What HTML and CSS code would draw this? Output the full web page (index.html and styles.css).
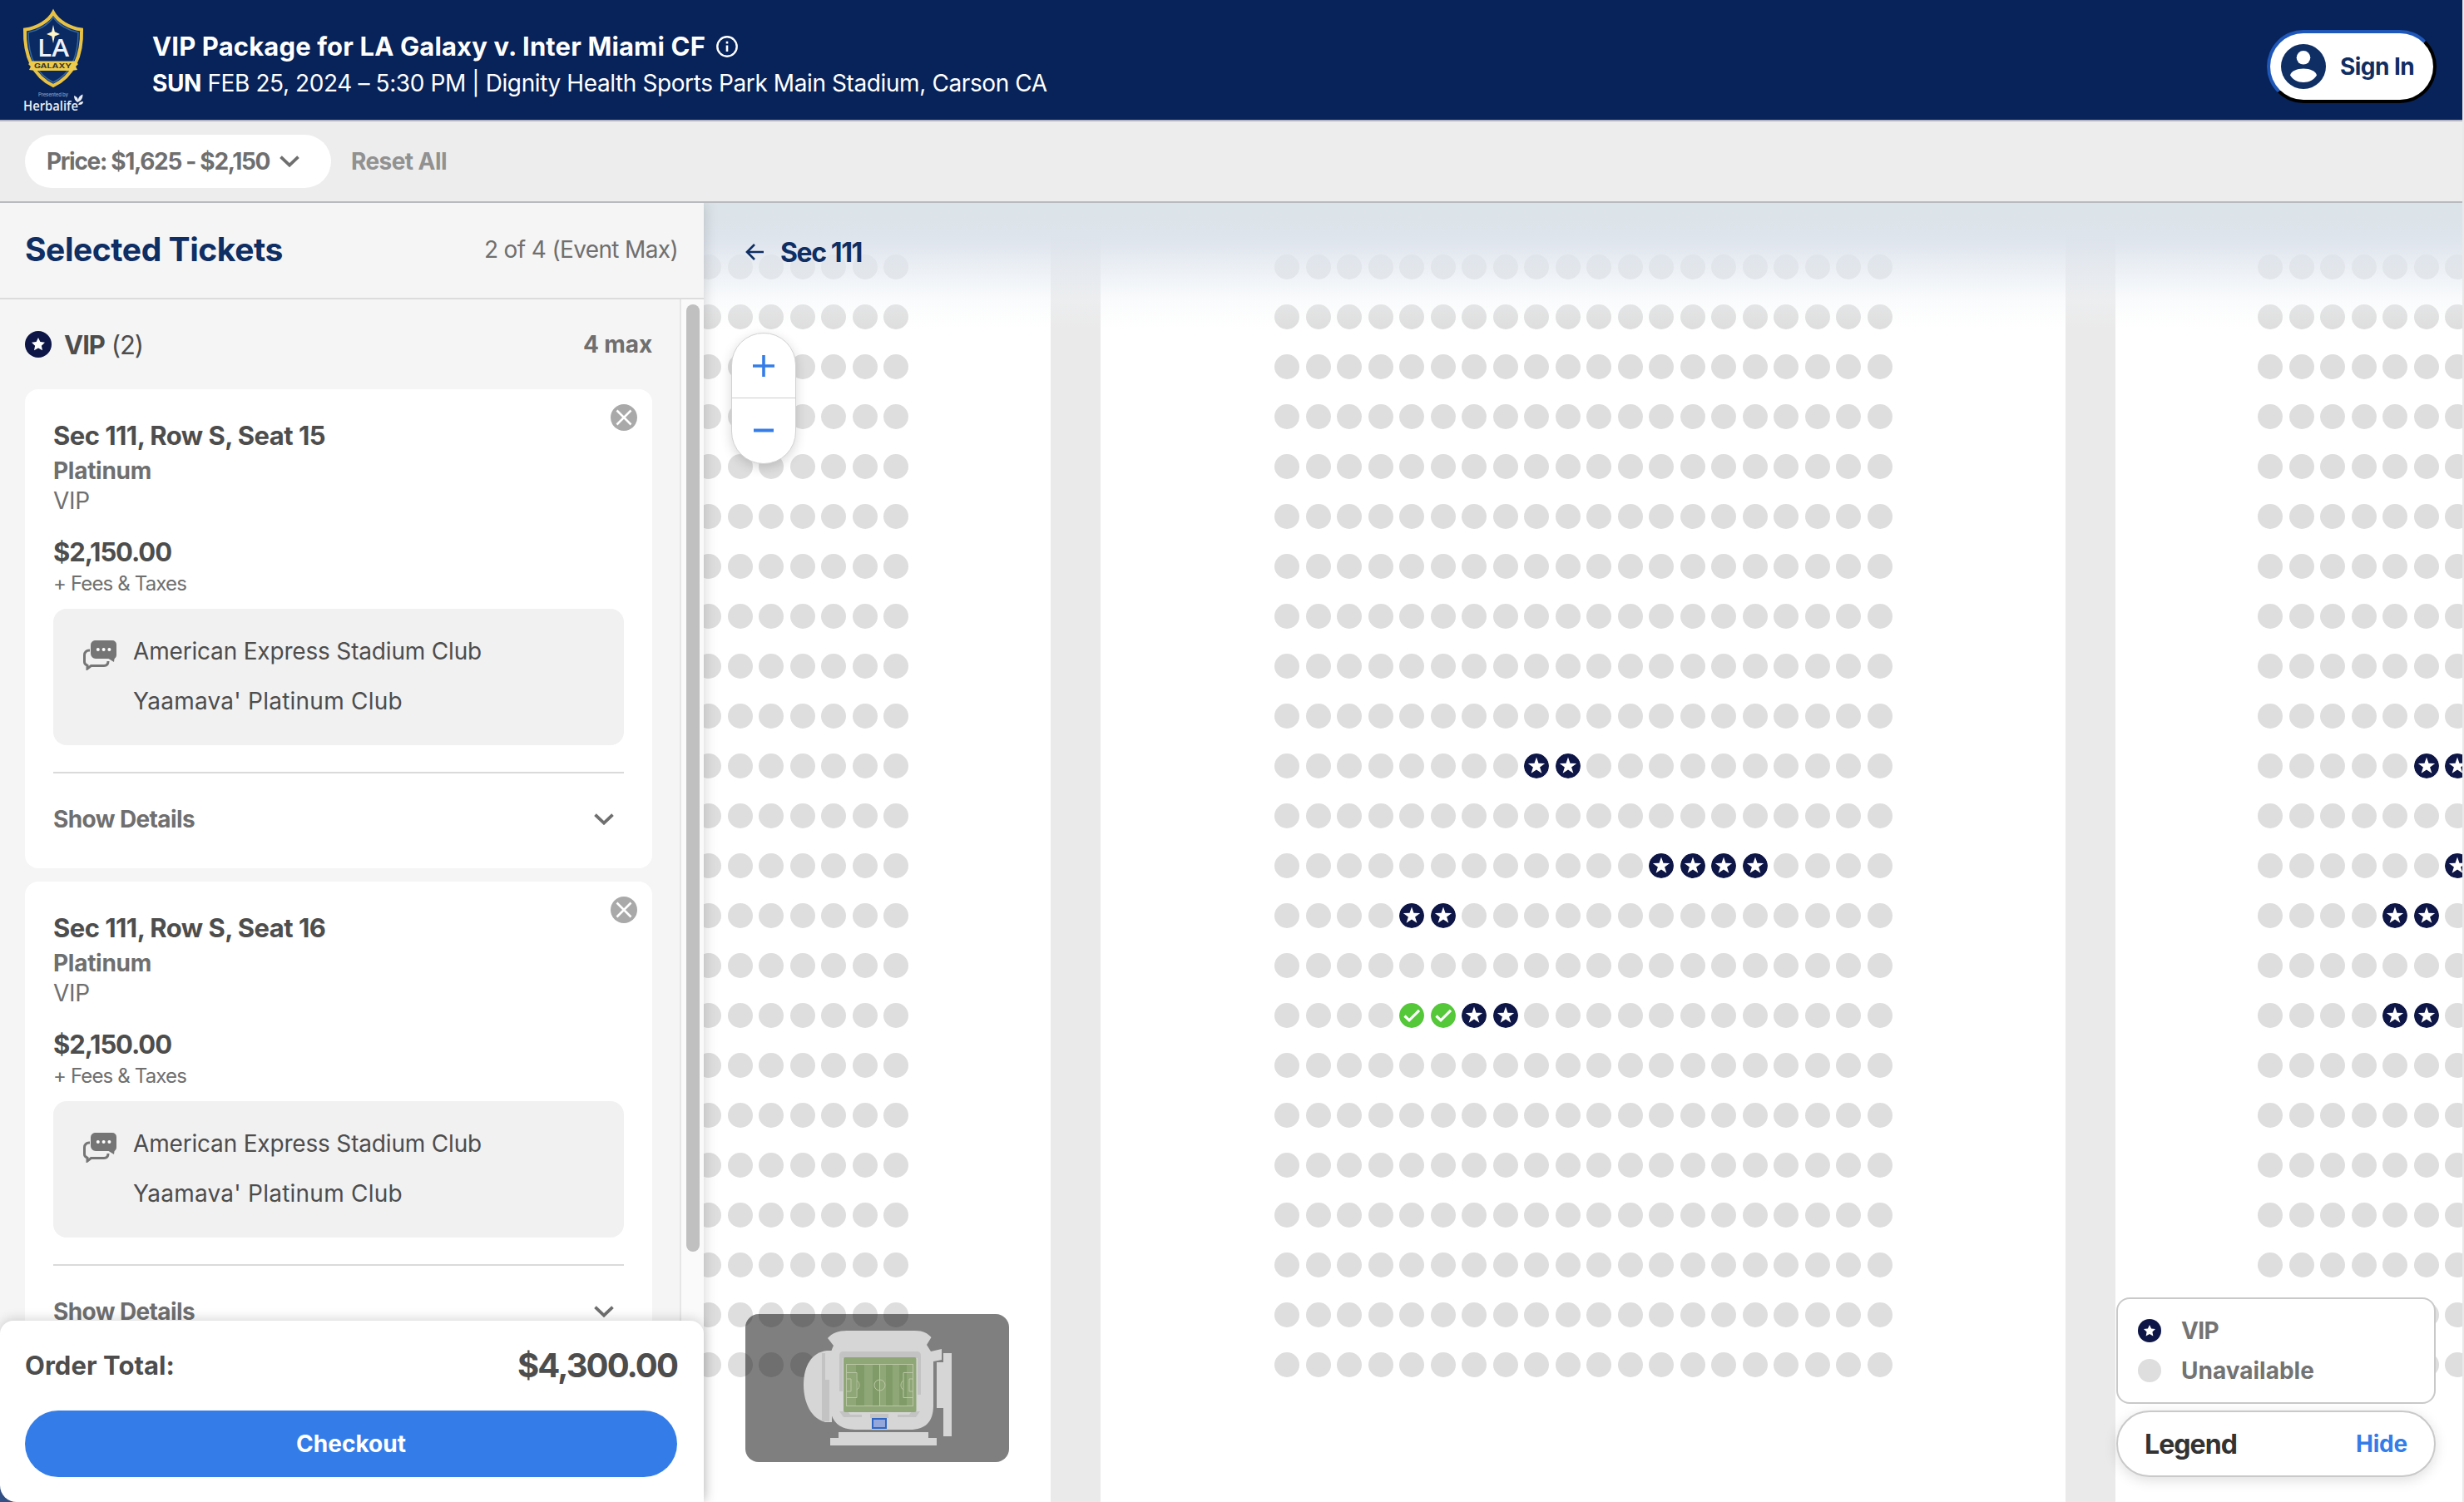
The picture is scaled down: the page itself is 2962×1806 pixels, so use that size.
FILE: index.html
```html
<!DOCTYPE html>
<html lang="en">
<head>
<meta charset="utf-8">
<title>VIP Package for LA Galaxy v. Inter Miami CF</title>
<link rel="stylesheet" href="styles.css">
</head>
<body>
<svg class="defs" aria-hidden="true">
  <symbol id="star" viewBox="0 0 32 32"><circle cx="16" cy="16" r="16" fill="#0d1646"/><path fill="#fff" d="M16 8l2.4 5.1 5.6.7-4.1 3.9 1.1 5.6-5-2.8-5 2.8 1.1-5.6L8 13.800l5.600-.7z"/></symbol>
  <symbol id="seat-star" viewBox="0 0 30 30"><circle cx="15" cy="15" r="15" fill="#0d1646"/><path fill="#fff" d="M15 4.500l2.500 7.200 7.700.200-6.100 4.500 2.300 7.400L15 19.400l-6.400 4.400 2.300-7.400-6.100-4.500 7.700-.200z"/></symbol>
  <symbol id="seat-check" viewBox="0 0 30 30"><circle cx="15" cy="15" r="15" fill="#55c83a"/><path fill="none" stroke="#fff" stroke-width="3.200" d="M6.500 15.500l5.500 5.300 12-12"/></symbol>
  <symbol id="chevron" viewBox="0 0 24 14"><path fill="none" stroke="#6f6f6f" stroke-width="3.800" d="M1.500 1.700L12 11.600 22.500 1.700"/></symbol>
  <symbol id="close" viewBox="0 0 32 32"><circle cx="16" cy="16" r="16" fill="#a9a9a9"/><path stroke="#fff" stroke-width="2.600" d="M7.500 7.500l17 17m0-17l-17 17"/></symbol>
  <symbol id="chat" viewBox="0 0 40 36"><path fill="#757575" d="M15 0h20a5 5 0 0 1 5 5v13a5 5 0 0 1-2.500 4.200L37 26l-6.500-4H15a6 6 0 0 1-6-6V5.500A5.500 5.500 0 0 1 15 0z"/><g fill="#fff"><circle cx="17.800" cy="11" r="2"/><circle cx="24.600" cy="11" r="2"/><circle cx="31.400" cy="11" r="2"/></g><path fill="none" stroke="#757575" stroke-width="3" d="M8 12H7a5.500 5.500 0 0 0-5.500 5.500v8.500c0 2 1 3.200 3.500 4.200V34l4.500-3.500H25c3.500 0 5-2 5-5.500"/></symbol>
</svg>
<div class="page">
  <header class="header">
    <svg class="logo" viewBox="0 0 72 122">
      <path d="M36 2C31 12 16 21 2 22.500 1 54 12 79 36 90c24-11 35-36 34-67.500C56 21 41 12 36 2z" fill="#0a2a63" stroke="#e8c245" stroke-width="4"/>
      <path d="M36 7.500C30 17 17 24 6 26c0 28 9 50 30 60 21-10 30-32 30-60C55 24 42 17 36 7.500z" fill="none" stroke="#35679c" stroke-width="1.500"/>
      <path d="M36 17l1.800 8.200L44 28l-6.200 2.500L36 39l-1.800-8.500L28 28l6.200-2.800z" fill="#fff7c8"/>
      <text x="17" y="55" class="logo-la" textLength="38" lengthAdjust="spacingAndGlyphs">LA</text>
      <path d="M6 64l4-3.500h52l4 3.500-3 3 2 4-7 1H14l-7-1 2-4z" fill="#edcb4c"/>
      <text x="13" y="68.500" class="logo-galaxy" textLength="45" lengthAdjust="spacingAndGlyphs">GALAXY</text>
      <text x="18" y="103" class="logo-by" textLength="36">Presented by</text>
      <text x="0" y="120" class="logo-herb" textLength="66" lengthAdjust="spacingAndGlyphs">Herbalife</text>
      <path d="M65 110c-3-2-4-5-4-8 3 1 5 3 5 6 0-4 2-6 5.500-7.500 0 5-2 8-6.500 9.500zM66 113c1-3 3-4 6-4 0 3-2 4.500-6 4z" fill="#e9edf5"/>
    </svg>
    <div class="event">
      <h1 class="event-title"><span class="t-title">VIP Package for LA Galaxy v. Inter Miami CF</span>
        <svg class="info" viewBox="0 0 26 26"><circle cx="13" cy="13" r="11.700" fill="none" stroke="#fff" stroke-width="2.400"/><path stroke="#fff" stroke-width="2.600" d="M13 11.500V19M13 6.800v2.700"/></svg>
      </h1>
      <p class="event-meta"><span class="t-meta"><b>SUN</b> FEB 25, 2024 – 5:30 PM | Dignity Health Sports Park Main Stadium, Carson CA</span></p>
    </div>
    <button class="sign-in">
      <svg class="avatar" viewBox="0 0 54 54"><circle cx="27" cy="27" r="27" fill="#0e2e64"/><circle cx="27" cy="16.300" r="8.300" fill="#fff"/><path fill="#fff" d="M11 37.500c1-5 8-8 16-8s15 3 16 8c-3 5-9 8.500-16 8.500s-13-3.500-16-8.500z"/></svg>
      <span class="t-sign">Sign In</span>
    </button>
  </header>
  <nav class="filters">
    <button class="price"><span class="t-pricef">Price: $1,625 - $2,150</span><svg class="chev"><use href="#chevron"/></svg></button>
    <span class="reset t-reset">Reset All</span>
  </nav>
  <main class="main">
    <aside class="panel">
      <div class="panel-head">
        <h2 class="t-selected">Selected Tickets</h2>
        <span class="count t-count">2 of 4 (Event Max)</span>
      </div>
      <div class="panel-body">
        <div class="list">
          <div class="group">
            <svg class="group-icon"><use href="#star"/></svg>
            <span class="group-name t-group"><b>VIP</b> (2)</span>
            <span class="group-max t-max">4 max</span>
          </div>
          <article class="ticket">
            <svg class="remove"><use href="#close"/></svg>
            <h3 class="seat-name t-seat">Sec 111, Row S, Seat 15</h3>
            <p class="level">Platinum</p>
            <p class="type">VIP</p>
            <p class="amount">$2,150.00</p>
            <p class="fees">+ Fees &amp; Taxes</p>
            <div class="perks">
              <svg class="chat"><use href="#chat"/></svg>
              <div><p class="t-perk1">American Express Stadium Club</p><p class="t-perk2">Yaamava' Platinum Club</p></div>
            </div>
            <div class="details"><span>Show Details</span><svg class="chev"><use href="#chevron"/></svg></div>
          </article>
          <article class="ticket">
            <svg class="remove"><use href="#close"/></svg>
            <h3 class="seat-name t-seat">Sec 111, Row S, Seat 16</h3>
            <p class="level">Platinum</p>
            <p class="type">VIP</p>
            <p class="amount">$2,150.00</p>
            <p class="fees">+ Fees &amp; Taxes</p>
            <div class="perks">
              <svg class="chat"><use href="#chat"/></svg>
              <div><p class="t-perk1">American Express Stadium Club</p><p class="t-perk2">Yaamava' Platinum Club</p></div>
            </div>
            <div class="details"><span>Show Details</span><svg class="chev"><use href="#chevron"/></svg></div>
          </article>
        </div>
        <div class="track"><div class="thumb"></div></div>
      </div>
      <div class="order">
        <div class="total"><span class="t-order">Order Total:</span><strong>$4,300.00</strong></div>
        <button class="checkout">Checkout</button>
      </div>
    </aside>
    <section class="map">
      <div class="blocks">
        <div class="block block-left"><div class="seats" data-block="left"></div></div>
        <div class="block block-center"><div class="seats" data-block="center"></div></div>
        <div class="block block-right"><div class="seats" data-block="right"></div></div>
      </div>
      <div class="fade"></div>
      <div class="back">
        <svg class="arrow" viewBox="0 0 22 20"><path fill="none" stroke="#0e2e64" stroke-width="2.600" d="M11 1L2 10l9 9M2 10h20"/></svg>
        <span class="t-sec">Sec 111</span>
      </div>
      <div class="zoom">
        <svg class="zoom-btn" viewBox="0 0 76 77"><path stroke="#347de8" stroke-width="3.600" d="M25 39h26M38 26v26"/></svg>
        <svg class="zoom-btn" viewBox="0 0 76 77"><path stroke="#347de8" stroke-width="4" d="M26 38.500h24"/></svg>
      </div>
      <svg class="minimap" viewBox="0 0 317 178">
        <g fill="#d6d6d6">
          <path d="M98 44C80 46 70 62 70 85s10 41 26 45h8V44z"/>
          <path d="M99 29C104 23 112 20 122 20h82c10 0 15 3 19.500 8l-5.500 9 5 8 13-3v13l-10 2v53c0 20-10 29-28 29h-66c-18 0-30-9-30-29V55c0-8 2-13 4-17z"/>
          <path d="M230 58h8v-11h10v100h-10v-34h-8zM112 142h108v7h10v9H102v-9h10z"/>
        </g>
        <path fill="#c3c3c3" d="M92 47h4v32h5v50h-9zM113 50q0-5 5-5h88q5 0 5 5v47h-4V53h-90v40h-4zM113 117h10l3 4h14v3h-22zM210 117h-10l-3 4h-14v3h22zM150 120h22v5h-22z"/>
        <rect x="118" y="52" width="87.500" height="66" rx="2" fill="#8fa777"/>
        <path fill="#819b68" d="M133 60h10v50h-10zM153 60h8v50h-8zM169 60h8v50h-8zM185 60h9v50h-9z"/>
        <g fill="none" stroke="#b9c6a4" stroke-width="1"><rect x="121.500" y="60.500" width="80" height="50"/><path d="M161.500 60v50M122 70.500h12v30h-12M122 78h5v15h-5M202 70.500h-12v30h12M202 78h-5v15h5M134 80c4 2 4 9 0 11M190 80c-4 2-4 9 0 11"/><circle cx="161.500" cy="85.500" r="6.500"/></g>
        <rect x="153" y="126" width="16" height="11" fill="#93a7dc" stroke="#2d66c4" stroke-width="2"/>
      </svg>
      <div class="legend">
        <div class="legend-items">
          <div class="legend-row"><svg class="legend-icon"><use href="#star"/></svg><span class="t-lvip">VIP</span></div>
          <div class="legend-row"><i class="legend-icon legend-gray"></i><span>Unavailable</span></div>
        </div>
        <div class="legend-bar"><span>Legend</span><a>Hide</a></div>
      </div>
    </section>
  </main>
</div>
<script src="seats.js"></script>
</body>
</html>
```
FILE: styles.css
```css
* { box-sizing: border-box; }
body { margin: 0; background: #e9e9ea; font-family: Inter, "Open Sans", sans-serif; font-size: 28px; color: #4d4d4d; white-space: nowrap; }
h1, h2, h3, p { margin: 0; }
button { font: inherit; margin: 0; cursor: pointer; }
svg { display: block; flex: none; }
.defs { position: absolute; width: 0; height: 0; }

/* per-label tracking */
.t-title { letter-spacing: .14px; }
.t-meta { letter-spacing: -.4px; }
.t-sign, .t-reset { letter-spacing: -.56px; }
.t-pricef { letter-spacing: -1.32px; }
.t-selected { letter-spacing: -.43px; }
.t-count { letter-spacing: -.64px; }
.t-group { letter-spacing: -1px; }
.t-max { letter-spacing: -.13px; }
.t-seat { letter-spacing: -.54px; }
.t-perk1 { letter-spacing: -.18px; }
.t-perk2 { letter-spacing: .24px; }
.t-order { letter-spacing: .06px; }
.t-sec { letter-spacing: -1.4px; }
.t-lvip { letter-spacing: -.6px; }

.page { width: 2960px; height: 1806px; display: flex; flex-direction: column; overflow: hidden; background: #fff; }

.header { height: 146px; display: flex; align-items: flex-start; background: #08235a; border-bottom: 2px solid #b4b5c0; color: #fff; padding-left: 28px; padding-right: 31px; }
.logo { width: 72px; height: 122px; margin-top: 13px; overflow: visible; }
.logo-la { font: 600 29px "Open Sans", sans-serif; fill: #eef1fa; }
.logo-galaxy { font: 700 7px Inter, sans-serif; fill: #3c3a28; }
.logo-by { font: 500 6px Inter, sans-serif; fill: #8d9bbb; }
.logo-herb { font: 600 17px "Open Sans", sans-serif; fill: #e9edf5; }
.event { margin-left: 83px; flex: 1; padding-top: 32px; }
.event-title { display: flex; align-items: center; gap: 13px; font-size: 31px; line-height: 48px; font-weight: 700; }
.info { width: 26px; height: 26px; }
.event-meta { line-height: 40px; }
.sign-in { margin-top: 36px; width: 204px; height: 88px; border-radius: 44px; border: 4px solid; border-color: #1f57b8 #000 #000 #1f57b8; background: #fff; color: #0e2e64; font-weight: 700; display: flex; align-items: center; gap: 17px; padding: 0 0 0 13px; }
.avatar { width: 54px; height: 54px; }

.filters { height: 98px; display: flex; align-items: center; background: #ededed; border-bottom: 2px solid #b9babf; padding-left: 30px; gap: 24px; font-weight: 700; }
.price { width: 368px; height: 64px; border: 0; border-radius: 32px; background: #fff; color: #6f6f6f; font-weight: 700; display: flex; align-items: center; gap: 12px; padding: 0 0 0 26px; }
.chev { width: 24px; height: 14px; }
.reset { color: #919191; }

.main { flex: 1; display: flex; min-height: 0; }
.panel { width: 846px; display: flex; flex-direction: column; background: #f5f5f5; position: relative; z-index: 2; box-shadow: 0 0 16px rgba(0,0,0,.18); clip-path: inset(0 -20px 0 0); }
.panel-head { height: 116px; flex: none; display: flex; justify-content: space-between; align-items: center; padding: 0 31px 3px 30px; border-bottom: 2px solid #dcdcdc; color: #6f6f6f; }
.panel-head h2 { font-size: 39px; color: #0e2e64; }
.panel-body { flex: 1; min-height: 0; display: flex; overflow: hidden; margin-bottom: -16px; }
.list { flex: 1; padding: 0 33px 0 30px; }
.group { height: 108px; display: flex; align-items: center; font-size: 31px; }
.group-icon { width: 32px; height: 32px; }
.group-name { margin-left: 15px; flex: 1; }
.group-max { font-size: 28px; font-weight: 700; color: #6f6f6f; }
.ticket { position: relative; height: 576px; padding: 36px 34px 0; background: #fff; border-radius: 16px; }
.ticket + .ticket { margin-top: 16px; }
.remove { position: absolute; top: 18px; right: 18px; width: 32px; height: 32px; }
.seat-name { font-size: 31px; line-height: 40px; }
.level { margin-top: 4px; line-height: 36px; font-weight: 700; color: #6f6f6f; letter-spacing: -.28px; }
.type { line-height: 36px; color: #6f6f6f; letter-spacing: -.24px; }
.amount { margin-top: 24px; font-size: 31px; line-height: 40px; font-weight: 700; letter-spacing: -1.09px; }
.fees { margin-top: 3px; font-size: 24px; line-height: 30px; color: #6f6f6f; letter-spacing: -.85px; }
.perks { margin-top: 15px; height: 164px; border-radius: 16px; background: #f1f1f1; padding: 21px 36px; display: flex; gap: 20px; line-height: 60px; }
.chat { width: 40px; height: 36px; margin-top: 17px; }
.details { margin-top: 32px; height: 112px; border-top: 2px solid #dadada; display: flex; justify-content: space-between; align-items: center; padding-right: 12px; font-weight: 700; color: #6f6f6f; letter-spacing: -.62px; }
.track { width: 29px; border-left: 2px solid #e6e6e6; background: #fafafa; padding: 6px 0 0 6px; }
.thumb { width: 16px; height: 1139px; border-radius: 8px; background: #c0c0c0; }
.order { position: relative; height: 218px; flex: none; background: #fff; border-radius: 16px 16px 0 20px; padding: 21px 32px 0 30px; box-shadow: 0 -2px 14px rgba(0,0,0,.16), -30px 30px 0 #35538a; }
.total { height: 64px; display: flex; justify-content: space-between; align-items: center; font-size: 31px; font-weight: 700; }
.total strong { font-size: 40px; font-weight: 700; letter-spacing: -1.9px; }
.checkout { margin-top: 23px; width: 784px; height: 80px; border: 0; border-radius: 40px; background: #347de8; color: #fff; font-weight: 700; }

.map { position: relative; flex: 1; overflow: hidden; background: #eaeaea; }
.blocks { display: flex; gap: 60px; height: 100%; }
.block { background: #fff; padding-top: 62px; flex: none; }
.block-left { width: 417px; display: flex; justify-content: flex-end; padding-right: 171px; }
.block-center { width: 1160px; padding-left: 209px; }
.block-right { width: 417px; padding-left: 171px; }
.seats { display: grid; grid-auto-rows: 30px; gap: 30px 7.5px; }
.seats[data-block="center"] { grid-template-columns: repeat(20, 30px); }
.seats[data-block="left"], .seats[data-block="right"] { grid-template-columns: repeat(7, 30px); }
.seat { width: 30px; height: 30px; border-radius: 50%; background: #dedede; }
.fade { position: absolute; inset: 0 0 auto 0; height: 152px; background: linear-gradient(#dbe4e8 0, #dde4eb 36px, rgba(222,228,237,.92) 50px, rgba(228,234,241,.7) 80px, rgba(240,244,247,.35) 118px, rgba(255,255,255,0)); }
.back { position: absolute; left: 50px; top: 34px; height: 50px; display: flex; align-items: center; gap: 20px; font-size: 32px; font-weight: 700; color: #0e2e64; }
.arrow { width: 22px; height: 20px; }
.zoom { position: absolute; left: 33px; top: 156px; width: 78px; height: 158px; border-radius: 39px; border: 1px solid #d2d2d2; background: #fff; box-shadow: 0 4px 14px rgba(0,0,0,.16); }
.zoom-btn { width: 76px; height: 77px; }
.zoom-btn + .zoom-btn { border-top: 1px solid #cfcfcf; height: 78px; }
.minimap { position: absolute; left: 50px; top: 1336px; width: 317px; height: 178px; border-radius: 16px; background: rgba(0,0,0,.5); }
.legend { position: absolute; right: 32px; bottom: 30px; width: 384px; display: flex; flex-direction: column; gap: 8px; font-weight: 700; color: #737373; }
.legend-items { height: 128px; border: 2px solid #c9c9c9; border-radius: 16px; background: #fff; padding: 14px 24px; }
.legend-row { height: 48px; display: flex; align-items: center; gap: 24px; }
.legend-icon { width: 28px; height: 28px; }
.legend-gray { border-radius: 50%; background: #dedede; }
.legend-bar { height: 80px; border: 2px solid #c9c9c9; border-radius: 40px; background: #fff; display: flex; justify-content: space-between; align-items: center; padding: 0 32px; font-size: 32px; color: #333; letter-spacing: -.92px; box-shadow: 0 4px 16px rgba(0,0,0,.13); }
.legend-bar a { font-size: 28px; color: #347de8; letter-spacing: -.2px; }
```
FILE: seats.js
```js
const ROWS = 23;
const blocks = {
  left: { cols: 7, marks: {} },
  center: { cols: 20, marks: { 10: { 8: "star", 9: "star" }, 12: { 12: "star", 13: "star", 14: "star", 15: "star" }, 13: { 4: "star", 5: "star" }, 15: { 4: "check", 5: "check", 6: "star", 7: "star" } } },
  right: { cols: 7, marks: { 10: { 5: "star", 6: "star" }, 12: { 6: "star" }, 13: { 4: "star", 5: "star" }, 15: { 4: "star", 5: "star" } } }
};
for (const el of document.querySelectorAll(".seats")) {
  const { cols, marks } = blocks[el.dataset.block];
  let html = "";
  for (let r = 0; r < ROWS; r++)
    for (let c = 0; c < cols; c++) {
      const kind = marks[r] && marks[r][c];
      html += kind ? `<svg class="seat"><use href="#seat-${kind}"/></svg>` : `<i class="seat"></i>`;
    }
  el.innerHTML = html;
}
```
